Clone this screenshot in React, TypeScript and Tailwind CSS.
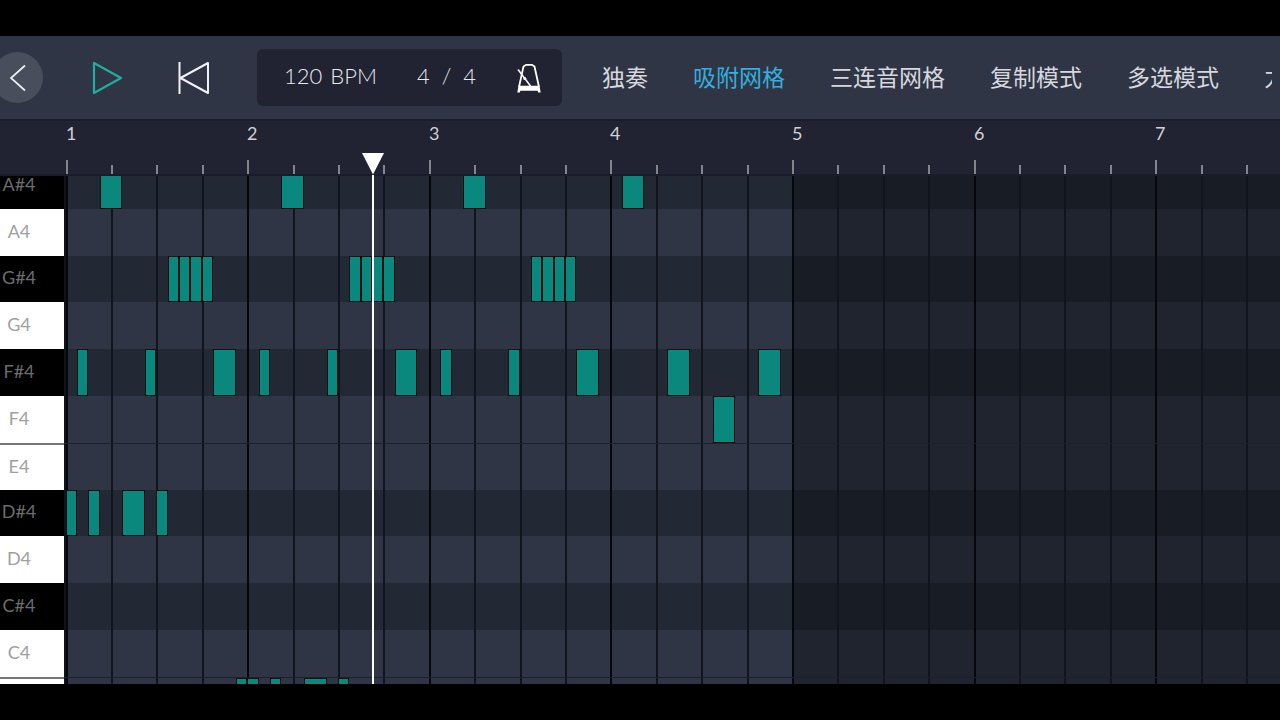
import { ChangeEvent, useState } from "react";

const STEPS_PER_BEAT = 4;
const BEATS_PER_BAR = 4;
const BEAT_WIDTH = 45.4;
const STEP_WIDTH = BEAT_WIDTH / STEPS_PER_BEAT;
const ROW_HEIGHT = 46.8;
const KEYS_WIDTH = 64;
const TOTAL_BARS = 16;
const CLIP_BARS = 4;
const PLAYHEAD_STEP = 27;

const keys = ["A#4", "A4", "G#4", "G4", "F#4", "F4", "E4", "D#4", "D4", "C#4", "C4", "B3"];

// [start step, length in steps]
const notes: Record<string, number[][]> = {
  "A#4": [[3, 2], [19, 2], [35, 2], [49, 2]],
  "G#4": [
    [9, 1], [10, 1], [11, 1], [12, 1],
    [25, 1], [26, 1], [27, 1], [28, 1],
    [41, 1], [42, 1], [43, 1], [44, 1],
  ],
  "F#4": [
    [1, 1], [7, 1], [13, 2],
    [17, 1], [23, 1], [29, 2],
    [33, 1], [39, 1], [45, 2],
    [53, 2], [61, 2],
  ],
  F4: [[57, 2]],
  "D#4": [[0, 1], [2, 1], [5, 2], [8, 1]],
  B3: [[15, 1], [16, 1], [18, 1], [21, 2], [24, 1]],
};

const modes = ["独奏", "吸附网格", "三连音网格", "复制模式", "多选模式", "力度"];

const beats = Array.from({ length: TOTAL_BARS * BEATS_PER_BAR }, (_, i) => i);

const stepX = (step: number) => Math.round(1.6 + step * STEP_WIDTH);
const beatWidth = (beat: number) =>
  stepX((beat + 1) * STEPS_PER_BEAT) - stepX(beat * STEPS_PER_BEAT);
const rowHeight = (row: number) =>
  Math.round((row + 1) * ROW_HEIGHT) - Math.round(row * ROW_HEIGHT);

function Toolbar() {
  const [playing, setPlaying] = useState(false);
  const [metronome, setMetronome] = useState(false);
  const [active, setActive] = useState("吸附网格");

  return (
    <header className="flex h-[83px] shrink-0 items-center bg-[#2f3545] pr-2">
      <button
        aria-label="Back"
        className="-ml-2 flex size-[51px] shrink-0 items-center justify-center rounded-full bg-[#494e5c]"
      >
        <svg width="18" height="28" viewBox="0 0 18 28" fill="none" stroke="#eeeff2" strokeWidth="1.7">
          <path d="M16 1.5 2 14l14 12.5" />
        </svg>
      </button>
      <button
        aria-label="Play"
        aria-pressed={playing}
        onClick={() => setPlaying(!playing)}
        className="ml-12 shrink-0"
      >
        <svg width="32" height="34" viewBox="0 0 32 34" fill="none" stroke="#1fae9f" strokeWidth="2.2" strokeLinejoin="round">
          <path d="M3 2v30l27-15z" />
        </svg>
      </button>
      <button aria-label="Rewind" className="ml-[54px] shrink-0">
        <svg width="34" height="34" viewBox="0 0 34 34" fill="none" stroke="#f1f2f5" strokeWidth="2" strokeLinejoin="round">
          <path d="M2.5 1v32M31 2v30L3.500 17z" />
        </svg>
      </button>

      <div className="ml-[46px] flex h-[57px] w-[305px] shrink-0 items-center rounded-md bg-[#212232] pl-[27px] text-[22px] text-[#e9e9ee]">
        <button className="flex gap-2 pb-1">
          <span>120</span>
          <span>BPM</span>
        </button>
        <button className="ml-10 flex gap-3 pb-1">
          <span>4</span>
          <span>/</span>
          <span>4</span>
        </button>
        <button
          aria-label="Metronome"
          aria-pressed={metronome}
          onClick={() => setMetronome(!metronome)}
          className="ml-10"
        >
          <svg width="26" height="30" viewBox="0 0 26 30" fill="none" stroke="#ffffff" strokeWidth="1.8">
            <path d="M3 24 7.500 3.500 10 1.800h6l2.500 1.700L23 24" />
            <path d="M2 6.500 14.500 23" strokeWidth="1.500" />
            <circle cx="8.800" cy="15.500" r="1.500" fill="#ffffff" stroke="none" />
            <path d="M2.500 22.800h21l1.200 6.700h-2.500l-.6-1.700H4.400l-.6 1.700H1.300z" fill="#ffffff" stroke="none" />
          </svg>
        </button>
      </div>

      <nav className="ml-10 flex min-w-0 flex-1 gap-[45px] overflow-hidden text-[23px] font-normal">
        {modes.map((mode) => (
          <button
            key={mode}
            onClick={() => setActive(mode)}
            className={`shrink-0 whitespace-nowrap ${
              mode === active ? "text-[#35aedb]" : "text-[#d6d8de]"
            }`}
          >
            {mode}
          </button>
        ))}
      </nav>
    </header>
  );
}

function Ruler() {
  return (
    <div className="flex h-[57px] shrink-0 overflow-hidden border-y-2 border-[#1a1c2b] bg-[#212232] pl-16">
      <div className="flex pl-[2px]">
        {beats.map((beat) => {
          const isBar = beat % BEATS_PER_BAR === 0;
          return (
            <div
              key={beat}
              className="flex shrink-0 flex-col justify-between"
              style={{ width: beatWidth(beat) }}
            >
              <span className="text-lg leading-6 font-normal text-[#d0d0d8]">
                {isBar ? beat / BEATS_PER_BAR + 1 : ""}
              </span>
              <span className={`w-[2px] bg-[#84848f] ${isBar ? "h-[14px]" : "h-[9px]"}`} />
            </div>
          );
        })}
      </div>
    </div>
  );
}

function PianoRoll() {
  return (
    <div className="relative min-h-0 flex-1 overflow-hidden">
      <div className="-mt-[14px]">
        {keys.map((key, row) => {
          const isBlack = key.includes("#");
          // two white keys side by side get a seam between them
          const seam = key === "E4" || key === "B3";
          return (
            <div key={key} className="flex" style={{ height: rowHeight(row) }}>
              <button
                className={`w-16 shrink-0 pr-[26px] pb-1 text-center text-lg leading-6 font-normal ${
                  isBlack ? "bg-black text-[#6c6c6c]" : "bg-white text-[#a0a0a0]"
                } ${seam ? "border-t-2 border-[#777777]" : ""}`}
              >
                {key}
              </button>
              <div
                className={`relative flex min-w-0 flex-1 overflow-hidden bg-[#11131c] pl-[2px] ${
                  seam ? "border-t border-[#1c1f2d]" : ""
                }`}
              >
                {beats.map((beat) => {
                  const inClip = beat < CLIP_BARS * BEATS_PER_BAR;
                  const fill = inClip
                    ? isBlack ? "bg-[#222934]" : "bg-[#2f3545]"
                    : isBlack ? "bg-[#181c25]" : "bg-[#20242f]";
                  const line = beat % BEATS_PER_BAR === 0 ? "border-[#06070d]" : "border-[#12141d]";
                  return (
                    <div
                      key={beat}
                      className={`shrink-0 border-l-2 ${fill} ${line}`}
                      style={{ width: beatWidth(beat) }}
                    />
                  );
                })}
                {(notes[key] || []).map(([start, length]) => (
                  <div
                    key={start}
                    className="absolute inset-y-0 border border-[#06120f] bg-[#0b887d]"
                    style={{
                      left: stepX(start),
                      width: stepX(start + length) - stepX(start),
                    }}
                  />
                ))}
              </div>
            </div>
          );
        })}
      </div>
    </div>
  );
}

function App() {
  const [position, setPosition] = useState(PLAYHEAD_STEP);

  const handleSeek = (e: ChangeEvent<HTMLInputElement>) => {
    setPosition(Number(e.target.value));
  };

  return (
    <div className="flex h-screen flex-col overflow-hidden bg-black py-9 font-['Lato','Noto_Sans_CJK_SC',sans-serif] font-light">
      <Toolbar />
      <main className="relative flex min-h-0 flex-1 flex-col overflow-hidden">
        <Ruler />
        <PianoRoll />

        {/* Playhead */}
        <input
          type="range"
          aria-label="Playhead position"
          min={0}
          max={TOTAL_BARS * BEATS_PER_BAR * STEPS_PER_BEAT}
          value={position}
          onChange={handleSeek}
          className="absolute top-8 left-16 h-6 opacity-0"
          style={{ width: stepX(TOTAL_BARS * BEATS_PER_BAR * STEPS_PER_BEAT) }}
        />
        <div
          className="pointer-events-none absolute top-[34px] bottom-0 flex w-[22px] -translate-x-1/2 flex-col items-center"
          style={{ left: KEYS_WIDTH + stepX(position) + 1 }}
        >
          <svg width="22" height="22" viewBox="0 0 22 22" fill="#ffffff">
            <path d="M0 0h22L11 21.500z" />
          </svg>
          <span className="w-[2px] flex-1 bg-white" />
        </div>
      </main>
    </div>
  );
}

export default App;
